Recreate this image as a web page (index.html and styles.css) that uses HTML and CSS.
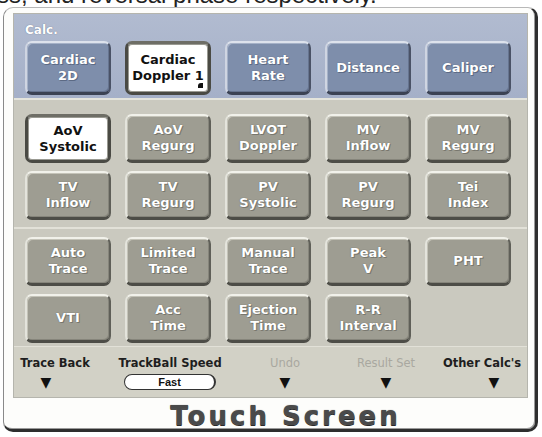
FILE: index.html
```html
<!DOCTYPE html>
<html lang="en">
<head>
    <meta charset="UTF-8">
    <title>Calc. - Touch Screen</title>
    <link rel="stylesheet" href="styles.css">
</head>
<body>
    <div class="caption"><p>ss, and reversal phase respectively.</p></div>

    <div class="frame">
        <div class="panel">
            <div class="section section-calc">
                <div class="section-title">Calc.</div>
                <div class="keys keys-top">
                    <button class="key key-blue">Cardiac<br>2D</button>
                    <button class="key key-on">Cardiac<br>Doppler 1<span class="corner"></span></button>
                    <button class="key key-blue">Heart<br>Rate</button>
                    <button class="key key-blue">Distance</button>
                    <button class="key key-blue">Caliper</button>
                </div>
            </div>

            <div class="section section-valves">
                <div class="keys">
                    <button class="key key-on">AoV<br>Systolic</button>
                    <button class="key">AoV<br>Regurg</button>
                    <button class="key">LVOT<br>Doppler</button>
                    <button class="key">MV<br>Inflow</button>
                    <button class="key">MV<br>Regurg</button>
                    <button class="key">TV<br>Inflow</button>
                    <button class="key">TV<br>Regurg</button>
                    <button class="key">PV<br>Systolic</button>
                    <button class="key">PV<br>Regurg</button>
                    <button class="key">Tei<br>Index</button>
                </div>
            </div>

            <div class="section section-trace">
                <div class="keys">
                    <button class="key">Auto<br>Trace</button>
                    <button class="key">Limited<br>Trace</button>
                    <button class="key">Manual<br>Trace</button>
                    <button class="key">Peak<br>V</button>
                    <button class="key">PHT</button>
                    <button class="key">VTI</button>
                    <button class="key">Acc<br>Time</button>
                    <button class="key">Ejection<br>Time</button>
                    <button class="key">R-R<br>Interval</button>
                </div>
            </div>

            <div class="section section-knobs">
                <div class="knob">
                    <span class="knob-label">Trace Back</span>
                    <span class="arrow arrow-left">&#9660;</span>
                </div>
                <div class="knob">
                    <span class="knob-label">TrackBall Speed</span>
                    <span class="pill">Fast</span>
                </div>
                <div class="knob">
                    <span class="knob-label off">Undo</span>
                    <span class="arrow">&#9660;</span>
                </div>
                <div class="knob">
                    <span class="knob-label off">Result Set</span>
                    <span class="arrow">&#9660;</span>
                </div>
                <div class="knob">
                    <span class="knob-label">Other Calc's</span>
                    <span class="arrow arrow-right">&#9660;</span>
                </div>
            </div>
        </div>

        <div class="footer">Touch Screen</div>
    </div>
</body>
</html>
```

FILE: styles.css
```css
body {
    margin: 0;
    width: 542px;
    height: 437px;
    overflow: hidden;
    background-color: #ffffff;
    font-family: "Liberation Sans", Arial, sans-serif;
}

/* line of text running above the frame */
.caption {
    height: 7px;
    overflow: hidden;
}
.caption p {
    margin: -17px 0 0 -3px;
    font-size: 24px;
    line-height: 24px;
    color: #222;
    white-space: nowrap;
}

.frame {
    margin: 0 4px 0 3px;
    height: 425px;
    box-sizing: border-box;
    border-top: 1px solid #b8b8b8;
    border-left: 1px solid #8a8a8a;
    border-right: 3px solid #2e2e2e;
    border-bottom: 3px solid #2e2e2e;
    border-radius: 10px;
    background-color: #fdfdfb;
    padding: 5px 7px 0 9px;
    box-shadow: inset -1px -1px 0 #9a9a9a;
}

.panel {
    border: 1px solid #b5b5ad;
    background-color: #cac9bf;
}

.section {
    padding: 0 16px 0 11px;
}

.section-calc {
    background: linear-gradient(#b1bbd0, #a5b0c8);
    padding-top: 6px;
    padding-bottom: 3px;
    border-bottom: 2px solid #e4e4dc;
}
.section-title {
    height: 18px;
    padding-top: 3px;
    color: #ffffff;
    font-family: "DejaVu Sans", sans-serif;
    font-size: 12px;
    font-weight: bold;
    text-shadow: 0 0 1px #55607a;
}

.section-valves {
    padding-top: 14px;
    padding-bottom: 7px;
    border-bottom: 2px solid #e2e1d8;
}

.section-trace {
    padding-top: 8px;
    padding-bottom: 3px;
    border-bottom: 1px solid #e2e1d8;
}

.keys {
    display: grid;
    grid-template-columns: repeat(5, 86px);
    grid-auto-rows: 49px;
    column-gap: 14px;
    row-gap: 8px;
}
.keys-top {
    grid-auto-rows: 54px;
}

.key {
    position: relative;
    margin: 0;
    padding: 0;
    border-radius: 7px;
    border-top: 2px solid #f1f1ea;
    border-left: 2px solid #e4e4dc;
    border-right: 2px solid #5f5f58;
    border-bottom: 3px solid #4d4d47;
    background-color: #9e9d92;
    box-shadow: inset 1px 1px 0 #c4c3b8, inset -1px -1px 0 #86857b;
    color: #ffffff;
    font-family: "DejaVu Sans", sans-serif;
    font-size: 13px;
    font-weight: bold;
    line-height: 16px;
    text-shadow: 0 0 1px #55554d, 1px 1px 0 #7c7b72;
}

.key-blue {
    background-color: #7e8eab;
    border-top-color: #dde2ec;
    border-left-color: #cfd5e2;
    border-right-color: #4a5266;
    border-bottom-color: #3b4253;
    box-shadow: inset 1px 1px 0 #a5b1c7, inset -1px -1px 0 #66748f;
    text-shadow: 0 0 1px #48536b, 1px 1px 0 #5f6d88;
}

.key-on {
    background-color: #ffffff;
    color: #111111;
    border: 3px solid #4a4a44;
    border-top-color: #6e6e66;
    box-shadow: inset 0 0 0 1px #9a9a92;
    text-shadow: none;
}

/* small dark notch at the bottom right of the doppler key */
.corner {
    position: absolute;
    right: 5px;
    bottom: 4px;
    width: 5px;
    height: 5px;
    background-color: #111;
    border-radius: 3px 0 0 0;
}

.section-knobs {
    display: grid;
    grid-template-columns: 82px 148px 82px 120px 72px;
    height: 50px;
    box-sizing: border-box;
    padding: 9px 0 0 0;
    background-color: #d2d1c6;
}
.knob {
    display: flex;
    flex-direction: column;
    align-items: center;
}
.knob-label {
    font-family: "DejaVu Sans", sans-serif;
    font-size: 11.5px;
    font-weight: bold;
    color: #1e1e1e;
    white-space: nowrap;
    height: 18px;
}
.knob-label.off {
    color: #a9a8a0;
    font-weight: normal;
}
.arrow {
    font-family: "DejaVu Sans", sans-serif;
    font-size: 14px;
    line-height: 16px;
    color: #111;
}
.arrow-left {
    margin-right: 18px;
}
.arrow-right {
    margin-left: 24px;
}
.pill {
    width: 92px;
    height: 16px;
    box-sizing: border-box;
    border: 1px solid #333;
    border-right-width: 2px;
    border-radius: 8px;
    background-color: #ffffff;
    font-size: 11px;
    font-weight: bold;
    line-height: 14px;
    text-align: center;
    color: #111;
}

.footer {
    padding: 4px 0 0 30px;
    text-align: center;
    font-family: "DejaVu Sans", sans-serif;
    font-size: 26px;
    font-weight: bold;
    letter-spacing: 3px;
    line-height: 28px;
    color: #4a4a4a;
    text-shadow: 0 0 1px #777, 0 1px 0 #222;
}
```
